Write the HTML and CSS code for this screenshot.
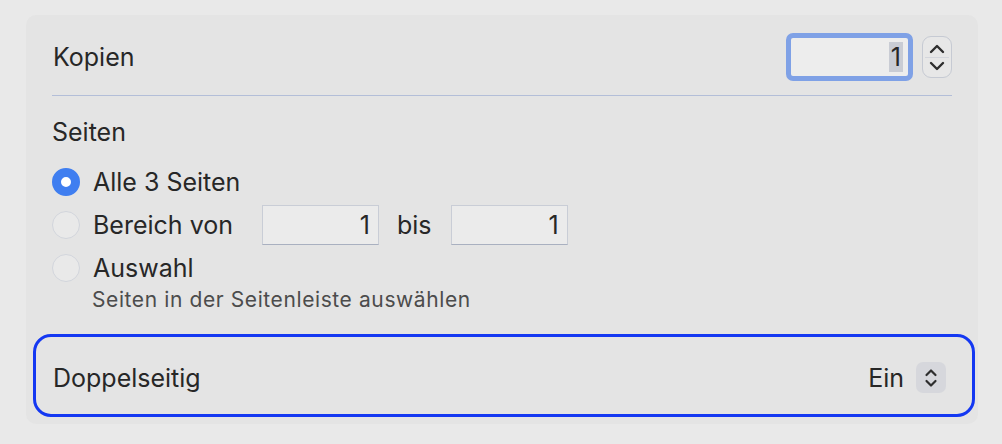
FILE: index.html
```html
<!DOCTYPE html>
<html lang="de">
<head>
  <meta charset="UTF-8">
  <title>Drucken</title>
  <link rel="stylesheet" href="styles.css">
</head>
<body>
  <div class="panel">

    <!-- Kopien -->
    <div class="row copies">
      <span class="label">Kopien</span>
      <div class="copies-ctrl">
        <div class="focus-field"><span class="sel">1</span></div>
        <div class="stepper">
          <svg width="16" height="10" viewBox="0 0 16 10"><path d="M2 8 L8 2 L14 8" fill="none" stroke="#2e2e2e" stroke-width="2.4" stroke-linecap="round" stroke-linejoin="round"/></svg>
          <span class="stepper-line"></span>
          <svg width="16" height="10" viewBox="0 0 16 10"><path d="M2 2 L8 8 L14 2" fill="none" stroke="#2e2e2e" stroke-width="2.4" stroke-linecap="round" stroke-linejoin="round"/></svg>
        </div>
      </div>
    </div>

    <div class="separator"></div>

    <!-- Seiten -->
    <div class="pages">
      <div class="heading">Seiten</div>
      <div class="radio-row">
        <span class="radio on"></span>
        <span class="label">Alle 3 Seiten</span>
      </div>
      <div class="radio-row">
        <span class="radio"></span>
        <span class="label">Bereich von</span>
        <div class="field from">1</div>
        <span class="label">bis</span>
        <div class="field to">1</div>
      </div>
      <div class="radio-row">
        <span class="radio"></span>
        <span class="label">Auswahl</span>
      </div>
      <div class="hint">Seiten in der Seitenleiste auswählen</div>
    </div>

    <!-- Doppelseitig -->
    <div class="duplex">
      <span class="label">Doppelseitig</span>
      <div class="popup">
        <span class="label">Ein</span>
        <div class="popup-arrows">
          <svg width="14" height="22" viewBox="0 0 14 22"><path d="M2.5 8 L7 3.5 L11.5 8 M2.5 14 L7 18.5 L11.5 14" fill="none" stroke="#2e2e2e" stroke-width="2.2" stroke-linecap="round" stroke-linejoin="round"/></svg>
        </div>
      </div>
    </div>

  </div>
</body>
</html>
```

FILE: styles.css
```css
/* Reset and basic styles */
* {
  margin: 0;
  padding: 0;
  box-sizing: border-box;
}

body {
  background: #e9e9e9;
  font-family: Inter, "Noto Sans", sans-serif;
  color: #272727;
  padding: 15px 24px 20px 26px;
}

.panel {
  background: #e4e4e4;
  border-radius: 10px;
  padding: 0 3px 7px 0;
  height: 409px;
}

.label {
  font-size: 25px;
  line-height: 30px;
}

/* Kopien row */
.row {
  display: flex;
  justify-content: space-between;
  align-items: center;
}

.copies {
  padding: 18px 23px 0 27px;
  height: 66px;
}

.copies-ctrl {
  display: flex;
  align-items: center;
  gap: 9px;
}

.focus-field {
  width: 127px;
  height: 48px;
  border: 5px solid #7fa1e6;
  border-radius: 7px;
  background: #ededed;
  display: flex;
  justify-content: flex-end;
  align-items: center;
  padding-right: 5px;
}

.sel {
  font-size: 25px;
  line-height: 30px;
  background: #c9ccd4;
  padding: 0 2px;
}

.stepper {
  width: 30px;
  height: 42px;
  border: 1px solid #c6cad3;
  border-radius: 9px;
  background: #e7e7e7;
  display: flex;
  flex-direction: column;
  align-items: center;
  justify-content: center;
  gap: 3px;
}

.stepper-line {
  width: 24px;
  height: 1px;
  background: #d4d6dc;
}

.separator {
  height: 1px;
  background: #b3bed8;
  margin: 14px 23px 0 26px;
}

/* Seiten */
.pages {
  padding: 22px 0 0 26px;
}

.heading {
  font-size: 25px;
  line-height: 28px;
  margin-bottom: 14px;
}

.radio-row {
  display: flex;
  align-items: center;
  height: 43px;
  gap: 13px;
}

.radio {
  width: 28px;
  height: 28px;
  border-radius: 50%;
  background: #e9e9e9;
  border: 1px solid #d2d5dc;
  flex-shrink: 0;
}

.radio.on {
  background: #fff;
  border: 9px solid #3f7ef0;
}

.field {
  width: 117px;
  height: 40px;
  background: #ebebeb;
  border: 1px solid #c9cdd6;
  border-bottom-color: #a9b0c0;
  font-size: 25px;
  line-height: 38px;
  text-align: right;
  padding-right: 8px;
}

.field.from {
  margin: 0 5px 0 16px;
}

.field.to {
  margin-left: 6px;
}

.hint {
  font-size: 21px;
  line-height: 22px;
  letter-spacing: 0.6px;
  color: #4c4c4c;
  padding-left: 40px;
}

/* Doppelseitig */
.duplex {
  margin: 23px 0 0 7px;
  height: 83px;
  border: 3px solid #1438f2;
  border-radius: 18px;
  display: flex;
  justify-content: space-between;
  align-items: center;
  padding: 4px 26px 0 17px;
}

.popup {
  display: flex;
  align-items: center;
  gap: 12px;
}

.popup-arrows {
  width: 30px;
  height: 31px;
  border-radius: 7px;
  background: #d6d7dc;
  display: flex;
  align-items: center;
  justify-content: center;
}
```
